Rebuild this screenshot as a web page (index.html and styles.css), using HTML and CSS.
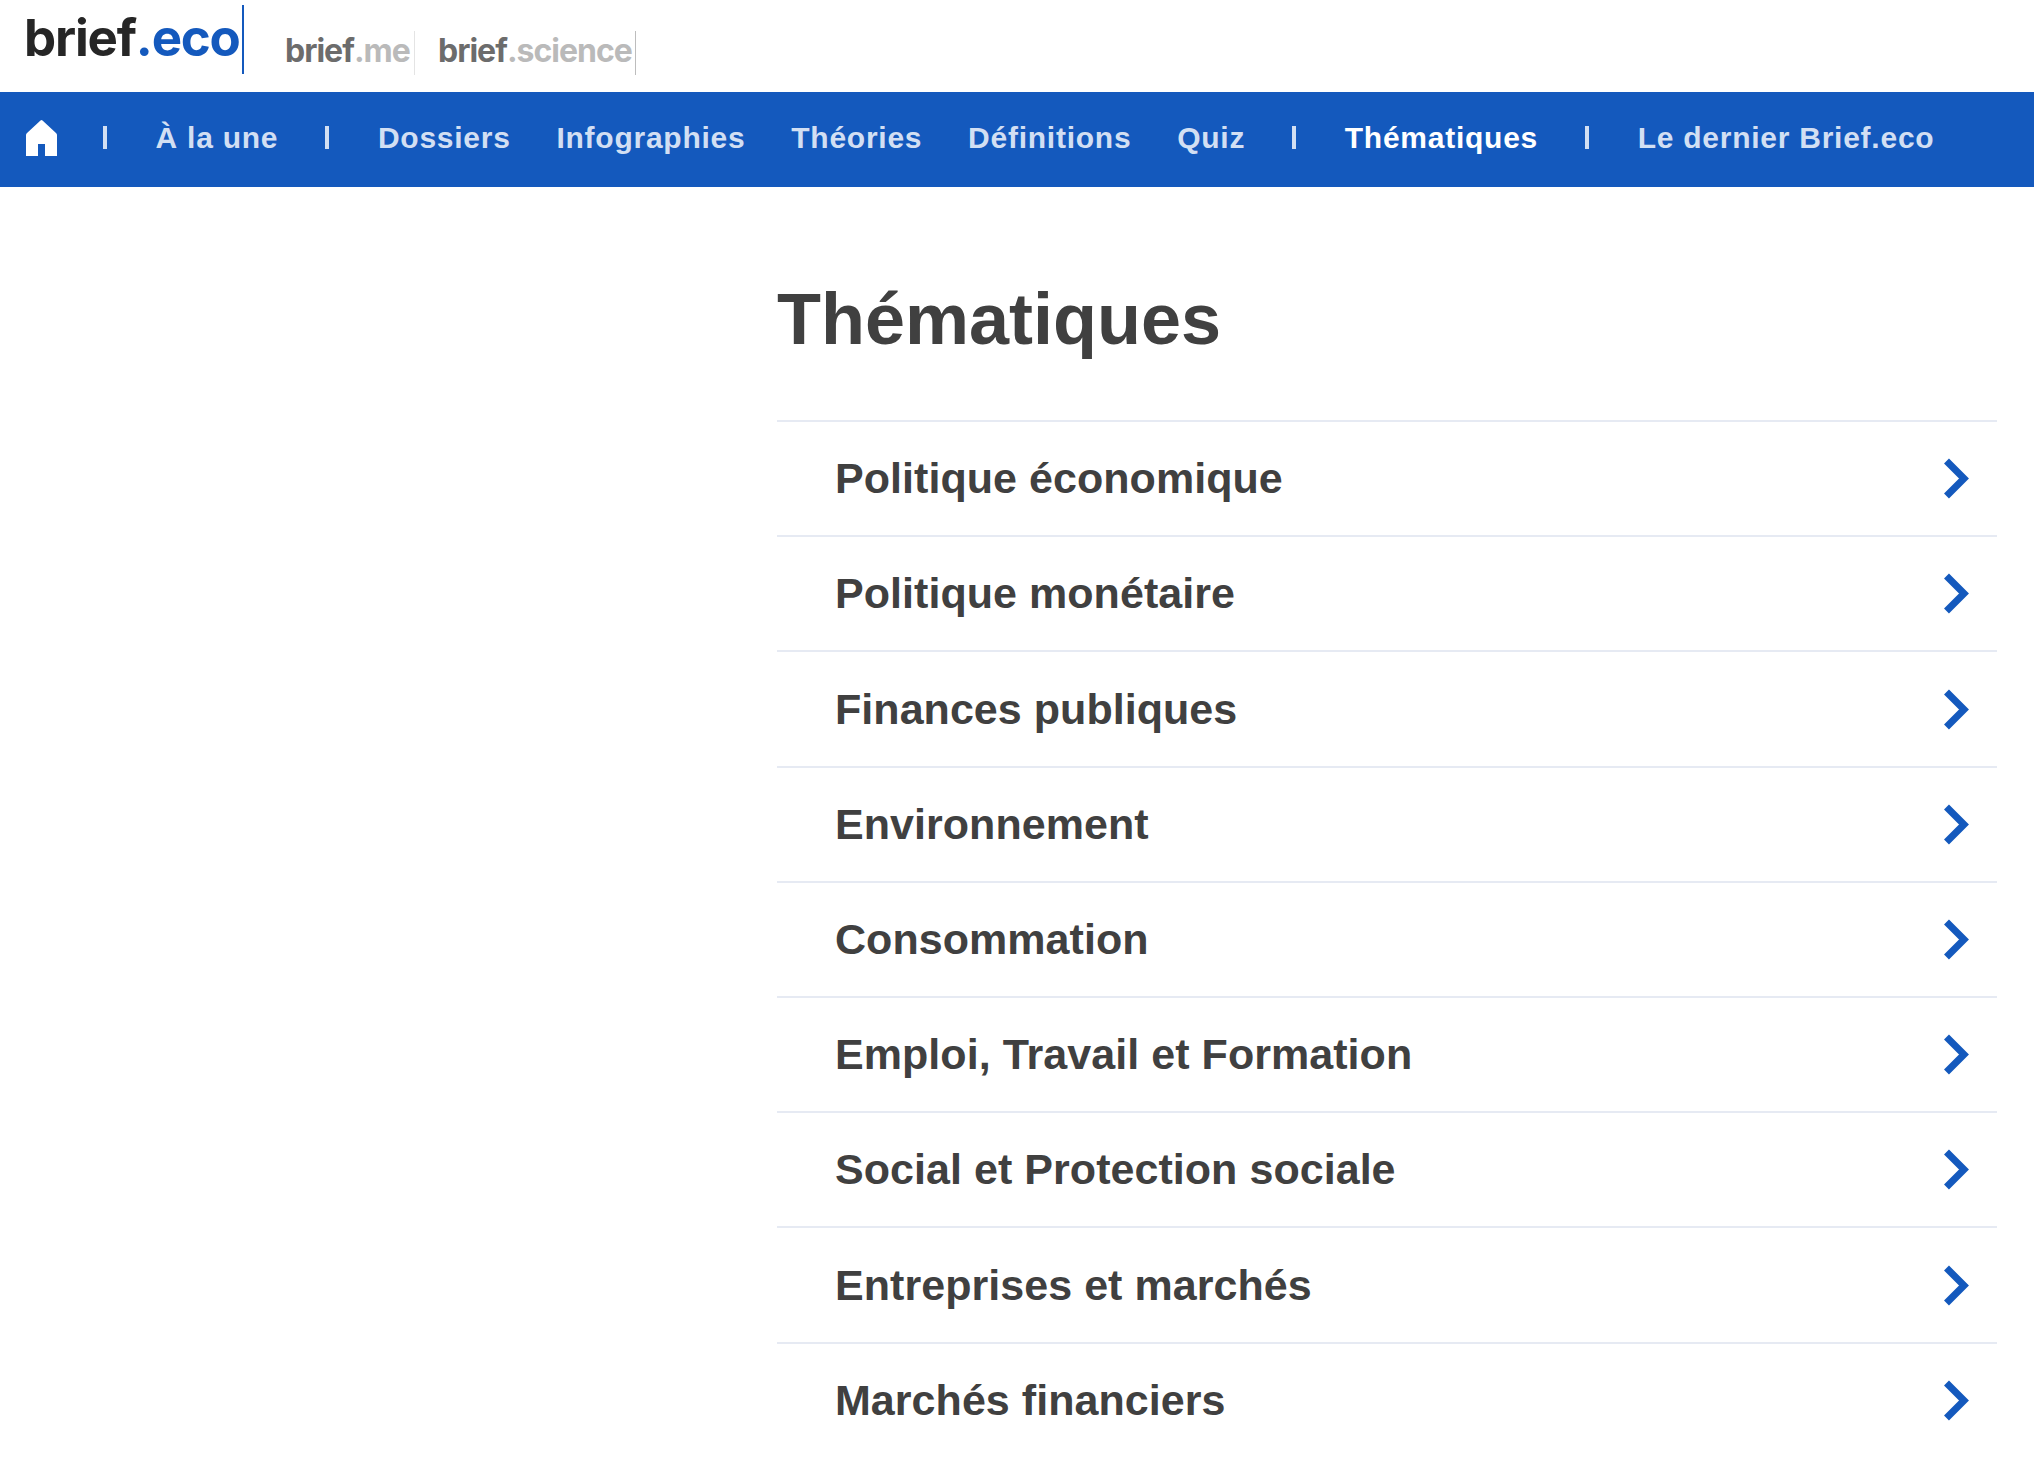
FILE: index.html
```html
<!DOCTYPE html>
<html lang="fr">
<head>
<meta charset="utf-8">
<title>Thématiques</title>
<link rel="stylesheet" href="styles.css">
</head>
<body>
<header class="brands">
  <a class="brand brand-main"><span class="b-dark">brief</span><span class="b-blue">.eco</span></a>
  <a class="brand brand-small brand-me"><span class="b-grey">brief</span><span class="b-light">.me</span></a>
  <a class="brand brand-small brand-sci"><span class="b-grey">brief</span><span class="b-light">.science</span></a>
</header>
<nav class="nav">
  <a class="home" aria-label="Accueil">
    <svg width="31" height="36" viewBox="0 0 31 36"><path d="M14.5 0.4 Q15.5 -0.3 16.5 0.4 L30 13 Q31 14 31 15 V36 H19 V24 H12 V36 H0 V15 Q0 14 1 13 Z" fill="#fff"/></svg>
  </a>
  <span class="sep"></span>
  <a class="link">À la une</a>
  <span class="sep"></span>
  <a class="link">Dossiers</a>
  <a class="link">Infographies</a>
  <a class="link">Théories</a>
  <a class="link">Définitions</a>
  <a class="link">Quiz</a>
  <span class="sep"></span>
  <a class="link active">Thématiques</a>
  <span class="sep"></span>
  <a class="link">Le dernier Brief.eco</a>
</nav>
<main class="content">
  <h1 class="title">Thématiques</h1>
  <ul class="list">
    <li class="row"><span>Politique économique</span><svg class="chev" width="27" height="41" viewBox="0 0 27 41"><path d="M3.5 3 L21 20.5 L3.5 38" fill="none" stroke="#1459bd" stroke-width="7"/></svg></li>
    <li class="row"><span>Politique monétaire</span><svg class="chev" width="27" height="41" viewBox="0 0 27 41"><path d="M3.5 3 L21 20.5 L3.5 38" fill="none" stroke="#1459bd" stroke-width="7"/></svg></li>
    <li class="row"><span>Finances publiques</span><svg class="chev" width="27" height="41" viewBox="0 0 27 41"><path d="M3.5 3 L21 20.5 L3.5 38" fill="none" stroke="#1459bd" stroke-width="7"/></svg></li>
    <li class="row"><span>Environnement</span><svg class="chev" width="27" height="41" viewBox="0 0 27 41"><path d="M3.5 3 L21 20.5 L3.5 38" fill="none" stroke="#1459bd" stroke-width="7"/></svg></li>
    <li class="row"><span>Consommation</span><svg class="chev" width="27" height="41" viewBox="0 0 27 41"><path d="M3.5 3 L21 20.5 L3.5 38" fill="none" stroke="#1459bd" stroke-width="7"/></svg></li>
    <li class="row"><span>Emploi, Travail et Formation</span><svg class="chev" width="27" height="41" viewBox="0 0 27 41"><path d="M3.5 3 L21 20.5 L3.5 38" fill="none" stroke="#1459bd" stroke-width="7"/></svg></li>
    <li class="row"><span>Social et Protection sociale</span><svg class="chev" width="27" height="41" viewBox="0 0 27 41"><path d="M3.5 3 L21 20.5 L3.5 38" fill="none" stroke="#1459bd" stroke-width="7"/></svg></li>
    <li class="row"><span>Entreprises et marchés</span><svg class="chev" width="27" height="41" viewBox="0 0 27 41"><path d="M3.5 3 L21 20.5 L3.5 38" fill="none" stroke="#1459bd" stroke-width="7"/></svg></li>
    <li class="row"><span>Marchés financiers</span><svg class="chev" width="27" height="41" viewBox="0 0 27 41"><path d="M3.5 3 L21 20.5 L3.5 38" fill="none" stroke="#1459bd" stroke-width="7"/></svg></li>
  </ul>
</main>
</body>
</html>
```

FILE: styles.css
```css
* { box-sizing: border-box; }
html, body { margin: 0; padding: 0; background: #fff; }
body { height: 1466px; overflow: hidden; font-family: "Liberation Sans", Arial, sans-serif; }

.brands { height: 92px; display: flex; align-items: flex-end; padding-left: 24px; font-family: Inter, sans-serif; }
.brand { display: flex; align-items: baseline; }
.brand-main { width: 220px; height: 69px; margin-bottom: 18px; padding-top: 3px; font-size: 51px; font-weight: 700; letter-spacing: -1.2px; border-right: 2px solid #1459bd; line-height: 60px; }
.brand-small { height: 44px; margin-bottom: 17px; font-size: 32px; font-weight: 700; letter-spacing: -1px; line-height: 40px; }
.brand-me { width: 130px; margin-left: 41px; border-right: 1px solid #e4e4e4; }
.brand-sci { width: 198px; margin-left: 23px; border-right: 1px solid #bdbdbd; }
.b-dark { color: #262626; }
.b-blue { color: #1459bd; }
.b-grey { color: #6c6c6c; }
.b-light { color: #bababa; }

.nav { height: 95px; background: #1459bd; display: flex; align-items: center; gap: 45.8px; padding-left: 26px; padding-bottom: 4px; font-size: 30px; font-weight: 700; letter-spacing: 0.75px; color: #d2dff3; }
.home { display: flex; width: 31px; margin-right: -1px; }
.sep { width: 4px; height: 23px; background: #d2dff3; margin: 0 3px 0 1px; }
.active { color: #fff; }

.content { margin-left: 777px; width: 1220px; }
.title { margin: 0; height: 233px; padding-top: 84px; font-size: 72px; line-height: 96px; font-weight: 700; color: #404040; }
.list { list-style: none; margin: 0; padding: 0; }
.row { height: 115.2px; display: flex; align-items: center; justify-content: space-between; padding: 0.4px 27px 0 58px; border-top: 2px solid #e6eaf3; font-size: 43px; font-weight: 700; letter-spacing: 0.05px; color: #404040; }
.chev { flex: none; }
```
